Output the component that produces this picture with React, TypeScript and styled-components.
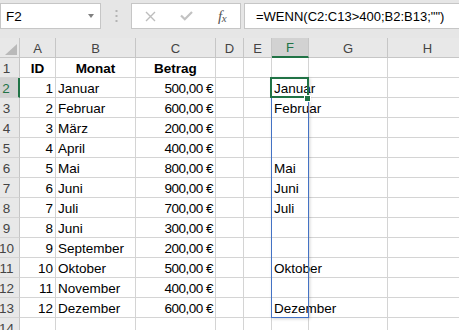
import React from "react";
import styled, { createGlobalStyle, css } from "styled-components";

const GlobalStyle = createGlobalStyle`
  html, body {
    margin: 0;
    padding: 0;
    background: #ffffff;
  }
  body {
    font-family: "Liberation Sans", Arial, sans-serif;
  }
`;

const GREEN = "#217346";
const GRID = "#d4d4d4";
const HEAD_LINE = "#c6c6c6";
const HEAD_BG = "#e8e8e8";

const Window = styled.div`
  width: 459px;
  height: 330px;
  overflow: hidden;
  background: #ffffff;
  color: #000;
`;

// formula bar
const FormulaBar = styled.div`
  height: 38px;
  box-sizing: border-box;
  padding-top: 3px;
  background: #e6e6e6;
  display: flex;
  align-items: flex-start;
`;

const Field = styled.div`
  box-sizing: border-box;
  height: 26px;
  background: #ffffff;
  border: 1px solid ${HEAD_LINE};
  display: flex;
  align-items: center;
  font-size: 13.5px;
  white-space: nowrap;
`;

const NameBox = styled(Field)`
  width: 101px;
  padding: 0 6px 0 5px;
  justify-content: space-between;
`;

const DropArrow = styled.span`
  width: 0;
  height: 0;
  border-left: 3.5px solid transparent;
  border-right: 3.5px solid transparent;
  border-top: 4px solid #808080;
`;

const Grip = styled.div`
  width: 30px;
  height: 26px;
  display: flex;
  align-items: center;
  justify-content: center;
`;

const ActionBox = styled(Field)`
  width: 110px;
  margin-right: 3px;
  display: grid;
  grid-template-columns: repeat(3, 1fr);
  justify-items: center;
`;

const FxLabel = styled.span`
  font-family: "Liberation Serif", "Times New Roman", serif;
  font-style: italic;
  font-size: 15px;
  color: #555;
  letter-spacing: -0.5px;
  sub {
    font-size: 11px;
    vertical-align: -1px;
  }
`;

const FormulaInput = styled(Field)`
  flex: 1;
  padding-left: 11px;
  font-size: 13px;
  border-right: none;
`;

// sheet
const Sheet = styled.div`
  position: relative;
  display: grid;
  grid-template-columns: 20px 36px 80px 80px 28px 28px 37px 79px 80px;
  grid-auto-rows: 20px;
  width: 468px;
`;

const cellBase = css`
  box-sizing: border-box;
  min-width: 0;
  white-space: nowrap;
  overflow: visible;
  display: flex;
`;

const Corner = styled.div`
  ${cellBase};
  position: relative;
  background: ${HEAD_BG};
  border-right: 1px solid ${HEAD_LINE};
  border-bottom: 1px solid ${HEAD_LINE};
  &::after {
    content: "";
    position: absolute;
    right: 2px;
    bottom: 2px;
    border-left: 12px solid transparent;
    border-bottom: 11px solid #b9b9b9;
  }
`;

const ColHead = styled.div<{ $active?: boolean }>`
  ${cellBase};
  align-items: center;
  justify-content: center;
  padding-top: 1px;
  font-size: 13px;
  color: ${(p) => (p.$active ? GREEN : "#444")};
  background: ${(p) => (p.$active ? "#d2d2d2" : HEAD_BG)};
  border-right: 1px solid ${HEAD_LINE};
  border-bottom: ${(p) => (p.$active ? `2px solid ${GREEN}` : `1px solid ${HEAD_LINE}`)};
`;

const RowHead = styled.div<{ $active?: boolean }>`
  ${cellBase};
  align-items: flex-end;
  justify-content: center;
  padding-right: 6px;
  font-size: 13.5px;
  line-height: 16px;
  color: ${(p) => (p.$active ? GREEN : "#444")};
  background: ${(p) => (p.$active ? "#d2d2d2" : HEAD_BG)};
  border-right: ${(p) => (p.$active ? `2px solid ${GREEN}` : `1px solid ${HEAD_LINE}`)};
  border-bottom: 1px solid ${GRID};
`;

const Cell = styled.div<{ $align?: "left" | "right" | "center"; $bold?: boolean; $tight?: boolean }>`
  ${cellBase};
  align-items: flex-end;
  justify-content: ${(p) =>
    p.$align === "right" ? "flex-end" : p.$align === "center" ? "center" : "flex-start"};
  padding: 0 2px;
  font-size: 13.5px;
  line-height: 16px;
  font-weight: ${(p) => (p.$bold ? 700 : 400)};
  letter-spacing: ${(p) => (p.$tight ? "-0.5px" : "normal")};
  border-right: 1px solid ${GRID};
  border-bottom: 1px solid ${GRID};
`;

// overlays on top of the grid
const SpillRange = styled.div`
  position: absolute;
  left: 271px;
  top: 39px;
  width: 38px;
  height: 241px;
  box-sizing: border-box;
  border: 1px solid #4472c4;
  box-shadow: 1px 1px 3px rgba(0, 0, 0, 0.18);
  pointer-events: none;
`;

const ActiveCell = styled.div`
  position: absolute;
  left: 270px;
  top: 39px;
  width: 39px;
  height: 21px;
  box-sizing: border-box;
  border: 2px solid ${GREEN};
  pointer-events: none;
`;

const FillHandle = styled.div`
  position: absolute;
  left: 304px;
  top: 57px;
  width: 7px;
  height: 7px;
  box-sizing: border-box;
  background: ${GREEN};
  border: 1px solid #ffffff;
`;

const columns = ["A", "B", "C", "D", "E", "F", "G", "H"];

const data: [number, string, number][] = [
  [1, "Januar", 500],
  [2, "Februar", 600],
  [3, "März", 200],
  [4, "April", 400],
  [5, "Mai", 800],
  [6, "Juni", 900],
  [7, "Juli", 700],
  [8, "Juni", 300],
  [9, "September", 200],
  [10, "Oktober", 500],
  [11, "November", 400],
  [12, "Dezember", 600],
];

function GripDots() {
  return (
    <svg width="3" height="12" viewBox="0 0 3 12">
      <rect x="0.5" y="0" width="2" height="2" fill="#b3b3b3" />
      <rect x="0.5" y="5" width="2" height="2" fill="#b3b3b3" />
      <rect x="0.5" y="10" width="2" height="2" fill="#b3b3b3" />
    </svg>
  );
}

function CancelIcon() {
  return (
    <svg width="11" height="11" viewBox="0 0 11 11">
      <path d="M1 1 L10 10 M10 1 L1 10" stroke="#bdbdbd" strokeWidth="1.4" fill="none" />
    </svg>
  );
}

function EnterIcon() {
  return (
    <svg width="13" height="10" viewBox="0 0 13 10">
      <path d="M1 4.5 L4.8 8.3 L12 1" stroke="#c2c2c2" strokeWidth="2.2" fill="none" />
    </svg>
  );
}

export default function App() {
  const rows: React.ReactNode[] = [];

  rows.push(
    <React.Fragment key="r1">
      <RowHead>1</RowHead>
      <Cell $align="center" $bold>ID</Cell>
      <Cell $align="center" $bold>Monat</Cell>
      <Cell $align="center" $bold>Betrag</Cell>
      <Cell />
      <Cell />
      <Cell />
      <Cell />
      <Cell />
    </React.Fragment>
  );

  data.forEach(([id, month, amount], i) => {
    const rowNo = i + 2;
    rows.push(
      <React.Fragment key={rowNo}>
        <RowHead $active={rowNo === 2}>{rowNo}</RowHead>
        <Cell $align="right">{id}</Cell>
        <Cell>{month}</Cell>
        <Cell $align="right" $tight>{`${amount},00 €`}</Cell>
        <Cell />
        <Cell />
        <Cell>{amount > 400 ? month : ""}</Cell>
        <Cell />
        <Cell />
      </React.Fragment>
    );
  });

  rows.push(
    <React.Fragment key="r14">
      <RowHead>14</RowHead>
      {columns.map((c) => (
        <Cell key={c} />
      ))}
    </React.Fragment>
  );

  return (
    <Window>
      <GlobalStyle />
      <FormulaBar>
        <NameBox>
          <span>F2</span>
          <DropArrow />
        </NameBox>
        <Grip>
          <GripDots />
        </Grip>
        <ActionBox>
          <CancelIcon />
          <EnterIcon />
          <FxLabel>
            f<sub>x</sub>
          </FxLabel>
        </ActionBox>
        <FormulaInput>=WENN(C2:C13&gt;400;B2:B13;"")</FormulaInput>
      </FormulaBar>
      <Sheet>
        <Corner />
        {columns.map((c) => (
          <ColHead key={c} $active={c === "F"}>
            {c}
          </ColHead>
        ))}
        {rows}
        <SpillRange />
        <ActiveCell />
        <FillHandle />
      </Sheet>
    </Window>
  );
}
